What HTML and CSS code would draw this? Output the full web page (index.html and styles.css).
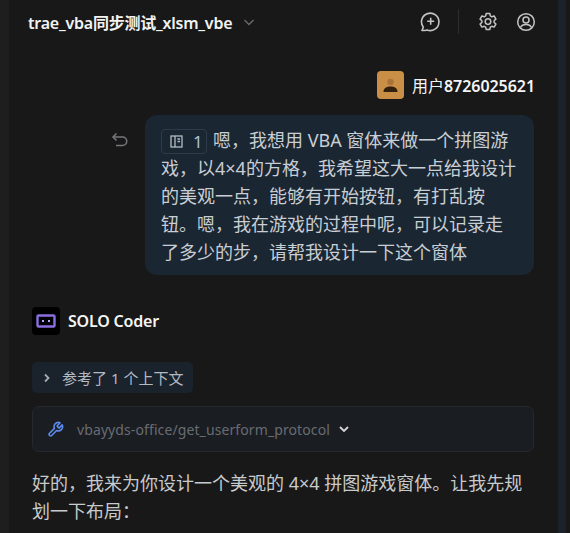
FILE: index.html
```html
<!DOCTYPE html>
<html lang="zh-CN">
<head>
    <meta charset="UTF-8">
    <title>trae_vba同步测试_xlsm_vbe</title>
    <link rel="stylesheet" href="styles.css">
</head>
<body>
    <div class="app">
        <div class="side-strip"></div>
        <div class="panel">
            <header class="top-bar">
                <span class="title">trae_vba同步测试_xlsm_vbe</span>
                <svg class="title-arrow" width="12" height="12" viewBox="0 0 12 12" fill="none" stroke="#6a6a70" stroke-width="1.3"><path d="M1.5 4l4.5 4.5L10.5 4"/></svg>
                <div class="top-actions">
                    <svg width="21" height="21" viewBox="0 0 21 21" fill="none" stroke="#c4c4c4" stroke-width="1.600"><path d="M2 19.500l1.300-3.300A8.700 8.700 0 1 1 7 19c-1.600.4-3.300.6-5 .5z" stroke-linejoin="round"/><path d="M10.700 6.700v7M7.200 10.200h7"/></svg>
                    <span class="top-sep"></span>
                    <svg class="gear" width="20" height="20" viewBox="0 0 20 20" fill="none" stroke="#c4c4c4" stroke-width="1.500"><path d="M8.200 1.500h3.600l.5 2.400 1.500.9 2.300-.8 1.800 3.100-1.800 1.600v1.700l1.800 1.600-1.800 3.100-2.300-.8-1.500.9-.5 2.400H8.200l-.5-2.400-1.500-.9-2.300.8-1.800-3.100 1.800-1.600V8.700L2.100 7.100l1.800-3.100 2.300.8 1.500-.9z" stroke-linejoin="round"/><circle cx="10" cy="9.600" r="2.800"/></svg>
                    <svg width="20" height="20" viewBox="0 0 20 20" fill="none" stroke="#c4c4c4" stroke-width="1.500"><circle cx="10" cy="10" r="8.300"/><circle cx="10" cy="8" r="3"/><path d="M4.500 15.500c1-2.300 3-3 5.500-3s4.500.7 5.500 3"/></svg>
                </div>
            </header>

            <div class="user-row">
                <span class="avatar">
                    <svg width="27" height="28" viewBox="0 0 27 28"><circle cx="13.500" cy="11" r="3.200" fill="#a8743a"/><path d="M6.500 21c0-4 3-5.500 7-5.500s7 1.500 7 5.500z" fill="#33200c"/></svg>
                </span>
                <span class="user-name"><span class="user-prefix">用户</span>8726025621</span>
            </div>

            <div class="question-row">
                <svg class="undo" width="18" height="18" viewBox="0 0 18 18" fill="none" stroke="#77777b" stroke-width="1.500"><path d="M5.500 2.500L2 6l3.500 3.500"/><path d="M2 6h9.500a4 4 0 0 1 0 8.500H5"/></svg>
                <div class="bubble">
                    <span class="context-tag">
                        <svg width="13" height="13" viewBox="0 0 13 13" fill="none" stroke="#b4bac2" stroke-width="1.300"><rect x="1" y="1" width="11" height="11"/><path d="M5 1v11M7.500 4h2.500M7.500 6.500h2.500"/></svg>
                        <span>1</span>
                    </span>嗯，我想用 VBA 窗体来做一个拼图游戏，以4×4的方格，我希望这大一点给我设计的美观一点，能够有开始按钮，有打乱按钮。嗯，我在游戏的过程中呢，可以记录走了多少的步，请帮我设计一下这个窗体
                </div>
            </div>

            <div class="agent-row">
                <span class="agent-logo">
                    <svg width="20" height="14" viewBox="0 0 20 14" fill="none"><rect x="1.500" y="1.500" width="17" height="11" rx="1" stroke="#8a6fe0" stroke-width="2.400"/><rect x="6" y="6" width="2" height="2" fill="#b9a6f5"/><rect x="12" y="6" width="2" height="2" fill="#b9a6f5"/></svg>
                </span>
                <span class="agent-name">SOLO Coder</span>
            </div>

            <div class="context-chip">
                <svg width="10" height="10" viewBox="0 0 10 10" fill="none" stroke="#a6abb2" stroke-width="1.800"><path d="M3 1.500L6.500 5 3 8.500"/></svg>
                <span>参考了 1 个上下文</span>
            </div>

            <div class="tool-card">
                <svg width="17" height="17" viewBox="0 0 24 24" fill="none" stroke="#5f8cf0" stroke-width="2.200" stroke-linejoin="round"><path d="M14.700 6.300a1 1 0 0 0 0 1.400l1.600 1.600a1 1 0 0 0 1.400 0l3.770-3.770a6 6 0 0 1-7.940 7.940l-6.910 6.910a2.120 2.120 0 0 1-3-3l6.910-6.910a6 6 0 0 1 7.940-7.940z"/></svg>
                <span class="tool-name">vbayyds-office/get_userform_protocol</span>
                <svg width="12" height="12" viewBox="0 0 12 12" fill="none" stroke="#d5d7da" stroke-width="1.800"><path d="M2 4l4 4 4-4"/></svg>
            </div>

            <p class="answer">好的，我来为你设计一个美观的 4×4 拼图游戏窗体。让我先规划一下布局：</p>
        </div>
        <div class="scroll-gutter"></div>
        <div class="right-strip"></div>
    </div>
</body>
</html>
```

FILE: styles.css
```css
html, body {
    margin: 0;
    height: 100%;
    overflow: hidden;
}
body {
    background-color: #181818;
    font-family: "Noto Sans", "Noto Sans CJK SC", sans-serif;
    color: #d4d6d9;
}
.app {
    display: flex;
    height: 533px;
}
.side-strip {
    width: 9px;
    background-color: #1e1e1e;
}
.panel {
    flex: 1;
    padding: 0 24px 0 23px;
    min-width: 0;
    overflow: hidden;
}
.scroll-gutter {
    width: 8px;
    background-color: #1c222a;
}
.right-strip {
    width: 4px;
    background-color: #181818;
}
.top-bar {
    display: flex;
    align-items: center;
    height: 43px;
    margin-left: -4px;
}
.title {
    font-size: 16px;
    font-weight: 600;
    letter-spacing: -0.23px;
    color: #f2f2f2;
}
.title-arrow {
    margin-left: 11px;
}
.top-actions {
    display: flex;
    align-items: center;
    margin-left: auto;
    margin-right: -2px;
}
.top-sep {
    width: 1px;
    height: 25px;
    background-color: #2e2e2e;
    margin: 0 19px 0 17px;
}
.gear {
    margin-right: 18px;
}
.user-row {
    display: flex;
    justify-content: flex-end;
    align-items: center;
    gap: 8px;
    margin: 28px -1px 0 0;
}
.avatar {
    width: 27px;
    height: 28px;
    border-radius: 4px;
    background-color: #c98f47;
}
.user-name {
    font-size: 16px;
    font-weight: 600;
    letter-spacing: -0.05px;
    color: #f4f4f4;
}
.user-prefix {
    font-weight: 400;
}
.question-row {
    display: flex;
    justify-content: flex-end;
    margin-top: 16px;
}
.undo {
    margin: 16px 16px 0 0;
}
.bubble {
    width: 389px;
    box-sizing: border-box;
    padding: 11px 16px 9px;
    border-radius: 12px;
    background-color: #1a2632;
    font-size: 18px;
    line-height: 28px;
    color: #c9ced4;
}
.context-tag {
    display: inline-flex;
    align-items: center;
    gap: 10px;
    height: 25px;
    width: 46px;
    padding: 0 0 0 8px;
    margin-right: 6px;
    border: 1px solid #2e3b4a;
    border-radius: 4px;
    box-sizing: border-box;
    font-size: 17px;
    line-height: 22px;
    vertical-align: -1px;
    color: #a9c4dc;
}
.agent-row {
    display: flex;
    align-items: center;
    gap: 8px;
    margin-top: 32px;
}
.agent-logo {
    display: flex;
    align-items: center;
    justify-content: center;
    width: 28px;
    height: 28px;
    border-radius: 4px;
    background-color: #000;
}
.agent-name {
    font-size: 16px;
    font-weight: 600;
    letter-spacing: -0.2px;
    color: #f4f4f4;
}
.context-chip {
    display: inline-flex;
    align-items: center;
    gap: 10px;
    height: 31px;
    margin-top: 27px;
    padding: 0 10px 0 10px;
    border-radius: 5px;
    background-color: #1a222c;
    font-size: 15px;
    color: #b4bac2;
}
.tool-card {
    display: flex;
    align-items: center;
    height: 46px;
    margin-top: 13px;
    padding: 0 14px;
    border: 1px solid #25282d;
    border-radius: 7px;
    background-color: #1a1d22;
    box-sizing: border-box;
}
.tool-name {
    margin: 0 8px 0 13px;
    font-size: 14px;
    letter-spacing: 0.1px;
    color: #686c72;
}
.answer {
    margin: 17px 0 0;
    font-size: 18px;
    line-height: 28px;
    color: #c8cacc;
}
```
